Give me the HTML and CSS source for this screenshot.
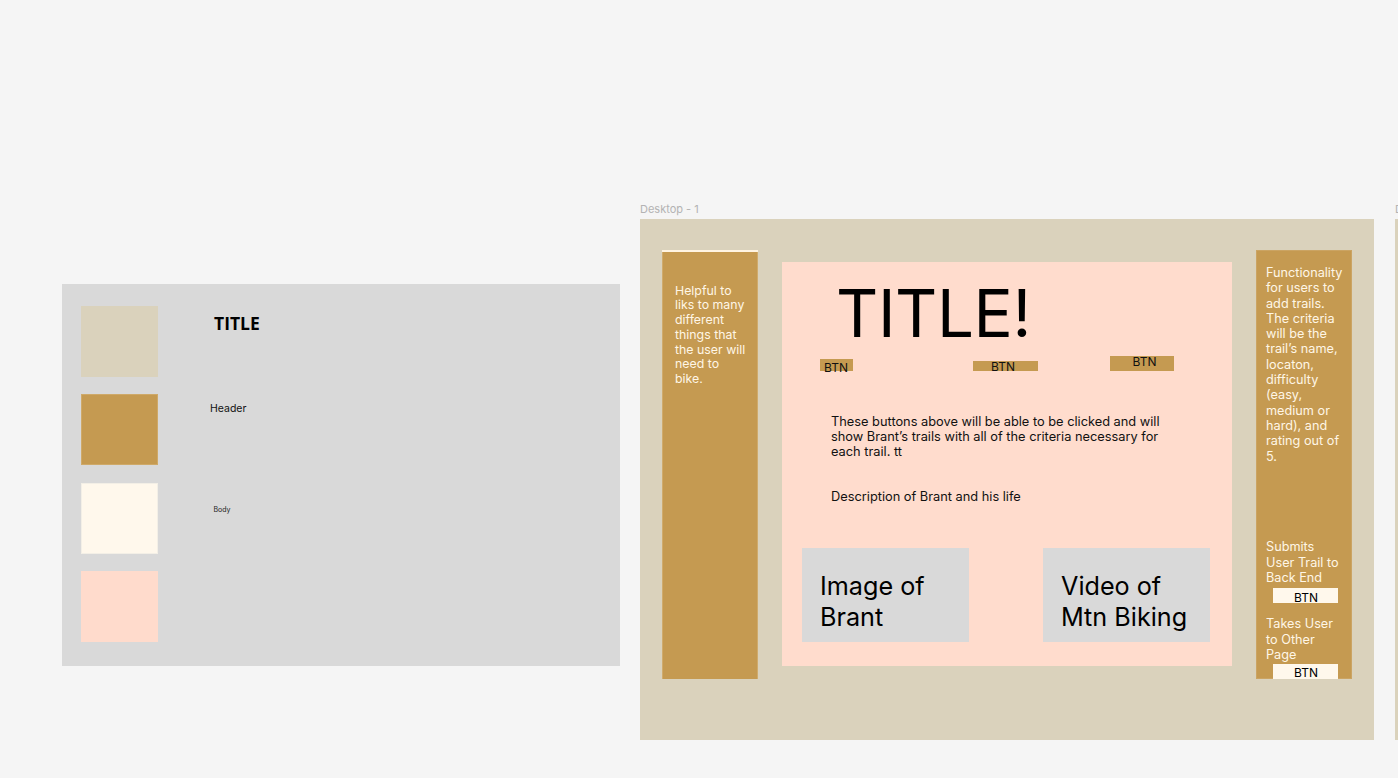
FILE: index.html
```html
<!DOCTYPE html>
<html lang="en">
<head>
<meta charset="utf-8">
<title>Trails canvas</title>
<link rel="stylesheet" href="styles.css">
</head>
<body>
<div class="canvas">
  <section class="style-frame">
    <div class="swatch beige"></div>
    <div class="label label-title">TITLE</div>
    <div class="swatch gold"></div>
    <div class="label label-header">Header</div>
    <div class="swatch cream"></div>
    <div class="label label-body">Body</div>
    <div class="swatch pink"></div>
    <div class="label"></div>
  </section>

  <div class="frame-name desktop-name">Desktop - 1</div>
  <section class="desktop">
    <aside class="side side-left">
      <p class="side-text ltext">Helpful to liks to many different things that the user will need to bike.</p>
    </aside>
    <main class="main">
      <h1 class="big-title">TITLE!</h1>
      <div class="btn-row">
        <div class="tbtn tbtn-1">BTN</div>
        <div class="tbtn tbtn-2">BTN</div>
        <div class="tbtn tbtn-3">BTN</div>
      </div>
      <p class="para">These buttons above will be able to be clicked and will show Brant’s trails with all of the criteria necessary for each trail. tt</p>
      <p class="para desc">Description of Brant and his life</p>
      <div class="media-row">
        <div class="media">Image of<br>Brant</div>
        <div class="media">Video of<br>Mtn Biking</div>
      </div>
    </main>
    <aside class="side side-right">
      <p class="side-text rtext">Functionality for users to add trails. The criteria will be the trail’s name, locaton, difficulty (easy, medium or hard), and rating out of 5.</p>
      <p class="side-text rtext narrow submits">Submits User Trail to Back End</p>
      <div class="wbtn wbtn-1">BTN</div>
      <p class="side-text rtext narrow takes">Takes User to Other Page</p>
      <div class="wbtn wbtn-2">BTN</div>
    </aside>
  </section>

  <div class="frame-name next-name">Desktop - 2</div>
  <section class="next-frame"></section>
</div>
</body>
</html>
```

FILE: styles.css
```css
html, body {
  margin: 0;
  padding: 0;
}
body {
  background: #f5f5f5;
  width: 1398px;
  height: 778px;
  overflow: hidden;
  font-family: Inter, "Liberation Sans", sans-serif;
}
.canvas {
  position: relative;
  width: 1398px;
  height: 778px;
  overflow: hidden;
}

/* style guide frame */
.style-frame {
  position: absolute;
  left: 62px;
  top: 284px;
  width: 558px;
  height: 382px;
  background: #d9d9d9;
  box-sizing: border-box;
  padding: 22px 0 0 19px;
  display: grid;
  grid-template-columns: 77px 1fr;
  grid-template-rows: repeat(4, 71px);
  row-gap: 17.3px;
  column-gap: 52px;
}
.swatch { width: 77px; height: 71px; }
.beige { background: #dad2bc; }
.gold { background: #c59a51; box-shadow: inset 0 0 0 1px #cfa968; }
.cream { background: #fff8ec; box-shadow: inset 0 0 0 1px #f3efe6; }
.pink { background: #ffdbcc; }
.label { color: #000; }
.label-title {
  font-family: "Open Sans", "Noto Sans", sans-serif;
  font-weight: 700;
  font-size: 17.5px;
  letter-spacing: 0;
  line-height: 20px;
  margin: 6.5px 0 0 4px;
}
.label-header {
  font-size: 10.5px;
  line-height: 13px;
  margin: 8px 0 0 0;
  color: #111;
}
.label-body {
  font-size: 7px;
  line-height: 9px;
  margin: 22px 0 0 3.5px;
  color: #222;
}

/* frame names */
.frame-name {
  position: absolute;
  top: 203px;
  font-size: 11px;
  line-height: 13px;
  color: #b3b3b3;
}
.desktop-name { left: 640px; }
.next-name { left: 1395px; }

/* desktop frame */
.desktop {
  position: absolute;
  left: 640px;
  top: 219px;
  width: 734px;
  height: 521px;
  background: #dad2bc;
  box-sizing: border-box;
  padding: 31px 22px 0 22px;
  display: flex;
  align-items: flex-start;
  gap: 24px;
}
.next-frame {
  position: absolute;
  left: 1395px;
  top: 219px;
  width: 734px;
  height: 521px;
  background: #dad2bc;
}

.side {
  width: 96px;
  height: 428.5px;
  background: #c59a51;
  box-sizing: border-box;
  flex: none;
  overflow: hidden;
  color: #fff6e6;
}
.side-left {
  border-top: 2.5px solid #fff4e2;
  padding: 31.5px 0 0 13px;
  box-shadow: inset 1px 0 0 #d0ab6c, inset -1px 0 0 #d0ab6c;
}
.side-right {
  padding: 15px 0 0 10px;
  box-shadow: inset 0 0 0 1px #cba463;
}
.side-text {
  margin: 0;
  font-size: 12px;
  line-height: 14.55px;
}
.ltext {
  font-size: 12.35px;
  line-height: 14.8px;
  width: 71px;
}
.rtext {
  font-size: 12.7px;
  line-height: 15.3px;
  width: 82px;
}
.narrow { width: 77px; }
.submits { margin-top: 75.5px; }
.takes { margin-top: 13.7px; }
.wbtn {
  width: 65px;
  height: 15px;
  background: #fff8ec;
  color: #000;
  font-size: 12px;
  line-height: 19px;
  text-align: center;
  margin-left: 6.5px;
  padding-left: 2px;
  box-sizing: border-box;
}
.wbtn-1 { margin-top: 2.4px; }
.wbtn-2 { margin-top: 1.7px; line-height: 18px; }

/* main */
.main {
  width: 450px;
  height: 404px;
  margin-top: 12px;
  background: #ffdccd;
  flex: none;
  box-sizing: border-box;
  padding: 19px 0 0 0;
  display: flex;
  flex-direction: column;
}
.big-title {
  margin: 0 0 0 54px;
  font-weight: 400;
  font-size: 65.5px;
  line-height: 66px;
  color: #000;
  letter-spacing: -0.4px;
}
.btn-row {
  display: flex;
  align-items: flex-end;
  height: 15px;
  margin-top: 9px;
  padding-left: 37.5px;
}
.tbtn {
  background: #c59a51;
  color: #111;
  font-size: 12px;
  box-sizing: border-box;
  white-space: nowrap;
}
.tbtn-1 {
  width: 33.5px;
  height: 12px;
  line-height: 18px;
  padding-left: 4.5px;
  margin-bottom: 0.3px;
}
.tbtn-2 {
  width: 65px;
  height: 10px;
  line-height: 12px;
  padding-left: 18px;
  margin-left: 120px;
  margin-bottom: 0.3px;
}
.tbtn-3 {
  width: 64px;
  height: 15px;
  line-height: 12px;
  padding-left: 23px;
  margin-left: 71.5px;
  margin-bottom: 0.3px;
}
.para {
  margin: 43px 0 0 49px;
  width: 350px;
  font-size: 12.8px;
  line-height: 15px;
  color: #111;
}
.desc { margin-top: 30px; }
.media-row {
  display: flex;
  gap: 74px;
  margin: 44px 0 0 20px;
}
.media {
  width: 167px;
  height: 94px;
  background: #d9d9d9;
  box-sizing: border-box;
  padding: 23px 0 0 18px;
  font-size: 25.2px;
  line-height: 31px;
  color: #000;
}
```
